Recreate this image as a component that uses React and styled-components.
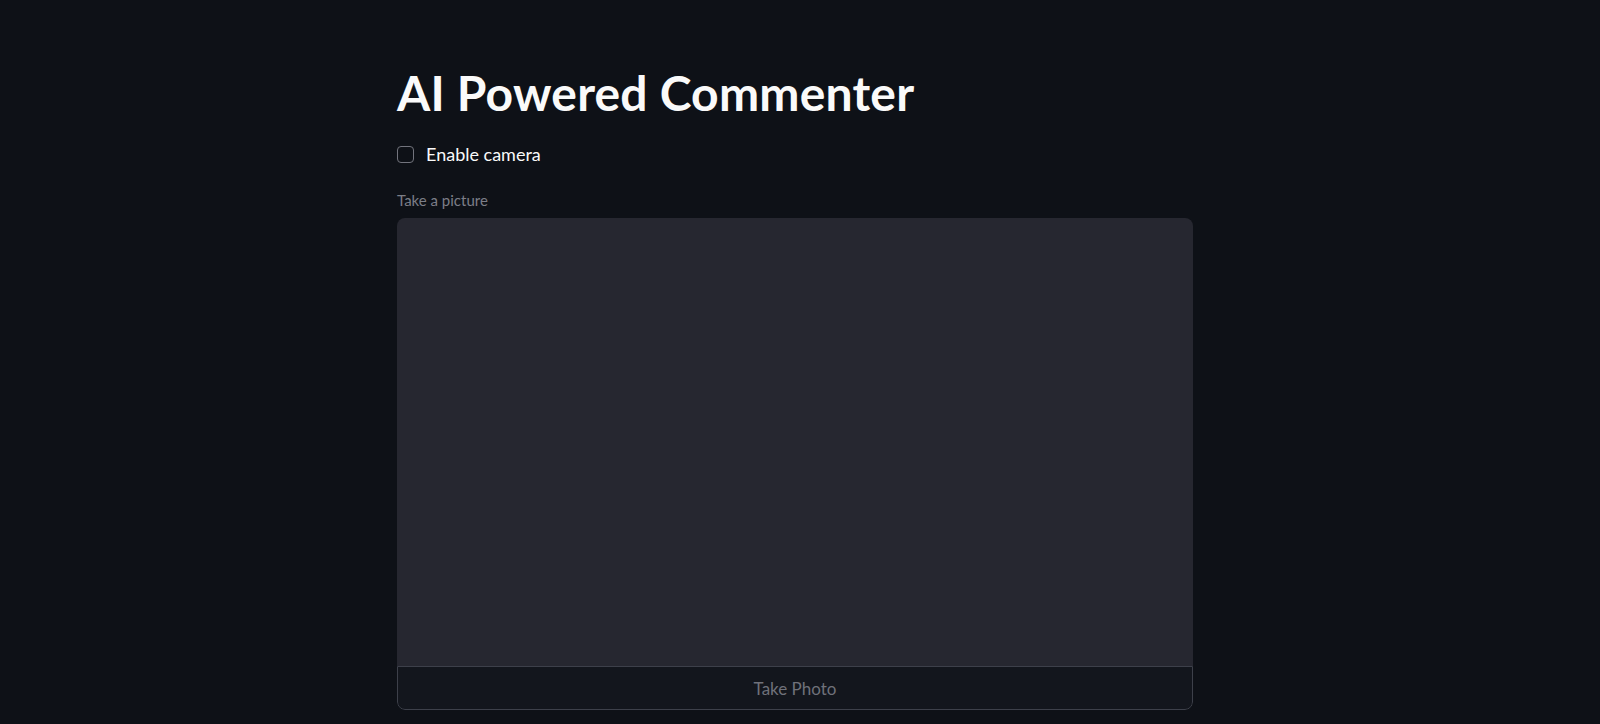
import React, { useState } from "react";
import styled, { createGlobalStyle } from "styled-components";

const GlobalStyle = createGlobalStyle`
  html, body {
    margin: 0;
    padding: 0;
    background: #0e1117;
  }
  body {
    font-family: Lato, "Noto Sans", sans-serif;
    color: #fafafa;
    padding-right: 10px;
  }
`;

const Main = styled.main`
  width: 796px;
  margin: 0 auto;
  padding-top: 64px;
`;

const Title = styled.h1`
  margin: 0;
  font-size: 48px;
  line-height: 58px;
  font-weight: 700;
  letter-spacing: 0.2px;
  color: #fafafa;
`;

const CheckRow = styled.label`
  margin-top: 20px;
  display: flex;
  align-items: center;
  gap: 12px;
  height: 24px;
  cursor: pointer;
`;

const Box = styled.span`
  width: 15px;
  height: 15px;
  border: 1px solid #72747d;
  border-radius: 4px;
  background: ${(p) => (p.checked ? "#ff4b4b" : "transparent")};
`;

const CheckText = styled.span`
  font-size: 18px;
  line-height: 24px;
`;

const FieldLabel = styled.div`
  margin-top: 24px;
  font-size: 15px;
  line-height: 20px;
  color: #7c7e87;
`;

const Camera = styled.div`
  margin-top: 8px;
  display: flex;
  flex-direction: column;
  border-radius: 8px;
  overflow: hidden;
`;

const Preview = styled.div`
  height: 448px;
  background: #262730;
`;

const PhotoButton = styled.button`
  height: 44px;
  background: #13161d;
  border: 1px solid #3d404a;
  border-radius: 0 0 8px 8px;
  color: #6f717a;
  font-family: Lato, "Noto Sans", sans-serif;
  font-size: 17px;
  cursor: default;
`;

export default function App() {
  const [enabled, setEnabled] = useState(false);

  return (
    <>
      <GlobalStyle />
      <Main>
        <Title>AI Powered Commenter</Title>
        <CheckRow onClick={() => setEnabled(!enabled)}>
          <Box checked={enabled} />
          <CheckText>Enable camera</CheckText>
        </CheckRow>
        <FieldLabel>Take a picture</FieldLabel>
        <Camera>
          <Preview />
          <PhotoButton disabled={!enabled}>Take Photo</PhotoButton>
        </Camera>
      </Main>
    </>
  );
}
